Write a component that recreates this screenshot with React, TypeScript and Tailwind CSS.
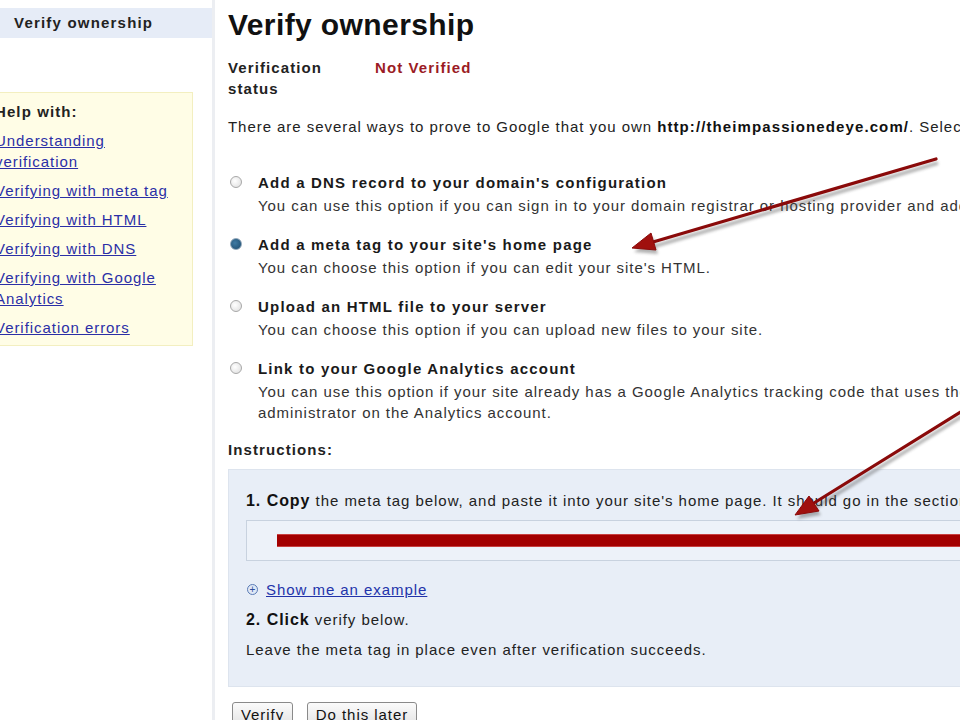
import React from "react";

const font = "font-['Liberation_Sans',Arial,Helvetica,sans-serif]";

function Radio({ checked }: { checked?: boolean }) {
  return (
    <div className="mt-[5px] shrink-0">
      {checked ? (
        <div className="w-[12px] h-[12px] rounded-full bg-[radial-gradient(circle_at_40%_40%,#3f7aa3,#1b4a6c)] border border-[#8fa5b8]" />
      ) : (
        <div className="w-[12px] h-[12px] rounded-full border border-[#a8a8a8] bg-[radial-gradient(circle_at_40%_40%,#ffffff,#dcdcdc)]" />
      )}
    </div>
  );
}

function Option({
  checked,
  title,
  children,
}: {
  checked?: boolean;
  title: string;
  children: React.ReactNode;
}) {
  return (
    <div className="flex gap-[16px] pl-[2px]">
      <Radio checked={checked} />
      <div>
        <div className="font-bold text-[#1a1a1a] leading-[24px] tracking-[1.2px]">{title}</div>
        <div className="text-[#333] leading-[21px] whitespace-nowrap">{children}</div>
      </div>
    </div>
  );
}

const links = [
  ["Understanding", "verification"],
  ["Verifying with meta tag"],
  ["Verifying with HTML"],
  ["Verifying with DNS"],
  ["Verifying with Google", "Analytics"],
  ["Verification errors"],
];

export default function App() {
  return (
    <div className={`${font} relative w-[960px] h-[720px] overflow-hidden bg-white text-[15px] tracking-[0.95px] text-[#111]`}>
      <div className="flex h-full">
        {/* Sidebar */}
        <div className="w-[215px] shrink-0 border-r-[3px] border-[#eceef2] pt-[8px]">
          <div className="h-[30px] bg-[#e6ecf7] flex items-center pl-[14px] font-bold tracking-[1.2px] text-[#222]">
            Verify ownership
          </div>
          <div className="mt-[54px] ml-[-14px] w-[207px] h-[254px] bg-[#fffde6] border border-[#f3efc0] pl-[8px] pt-[8px]">
            <div className="font-bold leading-[21px] tracking-[1.1px] text-[#222]">Help with:</div>
            <div className="mt-[8px] flex flex-col gap-[8px]">
              {links.map((l, i) => (
                <a key={i} className="text-[#2b2fa6] underline leading-[21px] block">
                  {l.map((t, j) => (
                    <div key={j}>{t}</div>
                  ))}
                </a>
              ))}
            </div>
          </div>
        </div>

        {/* Main */}
        <div className="flex-1 pl-[13px] min-w-0">
          <h1 className="text-[30px] font-bold leading-[34px] mt-[8px] tracking-[0.4px] text-[#111]">Verify ownership</h1>
          <div className="mt-[15px] flex font-bold leading-[21px] tracking-[1.1px]">
            <div className="w-[147px] text-[#222]">
              Verification
              <br />
              status
            </div>
            <div className="text-[#9b1b24]">Not Verified</div>
          </div>
          <div className="mt-[17px] leading-[21px] whitespace-nowrap text-[#222]">
            There are several ways to prove to Google that you own{" "}
            <b className="text-[#111] tracking-[1.1px]">http://theimpassionedeye.com/</b>. Select one of the options below.
          </div>

          <div className="mt-[34px] flex flex-col gap-[17px]">
            <Option title="Add a DNS record to your domain's configuration">
              You can use this option if you can sign in to your domain registrar or hosting provider and add a new DNS record.
            </Option>
            <Option checked title="Add a meta tag to your site's home page">
              You can choose this option if you can edit your site's HTML.
            </Option>
            <Option title="Upload an HTML file to your server">
              You can choose this option if you can upload new files to your site.
            </Option>
            <Option title="Link to your Google Analytics account">
              You can use this option if your site already has a Google Analytics tracking code that uses the asynchronous snippet and you are an
              <br />
              administrator on the Analytics account.
            </Option>
          </div>

          <div className="mt-[16px] font-bold leading-[21px] tracking-[1.1px] text-[#222]">Instructions:</div>

          <div className="mt-[9px] mr-[-60px] bg-[#e8eef7] border border-[#dde4ee] h-[218px] pl-[17px] pt-[20px] whitespace-nowrap">
            <div className="leading-[22px] text-[#222]">
              <b className="text-[16px] text-[#111]">1. Copy</b> the meta tag below, and paste it into your site's home page. It should go in the section, before the first &lt;body&gt; section.
            </div>
            <div className="mt-[8px] h-[41px] bg-[#edf2f9] border border-[#c8d2df] flex items-center pl-[30px]">
              <div className="h-[13px] w-full bg-[#a30000] border-y border-[#c84040]" />
            </div>
            <div className="mt-[18px] flex items-center gap-[8px] leading-[21px]">
              <span className="w-[11px] h-[11px] rounded-full border border-[#5a7bb5] bg-[#dfe8f6] flex items-center justify-center text-[10px] tracking-normal leading-none text-[#2d4e9a] ml-[1px]">
                +
              </span>
              <a className="text-[#2233aa] underline">Show me an example</a>
            </div>
            <div className="mt-[9px] leading-[21px] text-[#222]">
              <b className="text-[16px] text-[#111]">2. Click</b> verify below.
            </div>
            <div className="mt-[9px] leading-[21px] text-[#222]">
              Leave the meta tag in place even after verification succeeds.
            </div>
          </div>

          <div className="mt-[15px] ml-[4px] flex gap-[14px]">
            <button className="h-[26px] border border-[#8a8a8a] rounded-[3px] bg-[linear-gradient(#fbfbfb,#e2e2e2)] text-[15px] text-[#111] w-[61px]">
              Verify
            </button>
            <button className="h-[26px] border border-[#8a8a8a] rounded-[3px] bg-[linear-gradient(#fbfbfb,#e2e2e2)] text-[15px] text-[#111] w-[110px]">
              Do this later
            </button>
          </div>
        </div>
      </div>

      {/* Annotation arrows */}
      <svg className="absolute inset-0 pointer-events-none" width="960" height="720" viewBox="0 0 960 720">
        <defs>
          <filter id="sh" x="-20%" y="-20%" width="140%" height="140%">
            <feGaussianBlur stdDeviation="1.5" />
          </filter>
        </defs>
        <g opacity="0.45" filter="url(#sh)" transform="translate(2,4)">
          <line x1="936" y1="159" x2="653" y2="242" stroke="#555" strokeWidth="3.5" />
          <polygon points="632,248 656,250 651,233" fill="#555" />
          <line x1="975" y1="403" x2="814" y2="503" stroke="#555" strokeWidth="3.5" />
          <polygon points="795,515 819,511 809,496" fill="#555" />
        </g>
        <line x1="936" y1="159" x2="653" y2="242" stroke="#8a0a0a" strokeWidth="3.2" strokeLinecap="round" />
        <polygon points="632,248 656,250 651,233" fill="#a0100e" stroke="#8a0a0a" strokeWidth="1" />
        <line x1="975" y1="403" x2="814" y2="503" stroke="#8a0a0a" strokeWidth="3.2" strokeLinecap="round" />
        <polygon points="795,515 819,511 809,496" fill="#a0100e" stroke="#8a0a0a" strokeWidth="1" />
      </svg>
    </div>
  );
}
